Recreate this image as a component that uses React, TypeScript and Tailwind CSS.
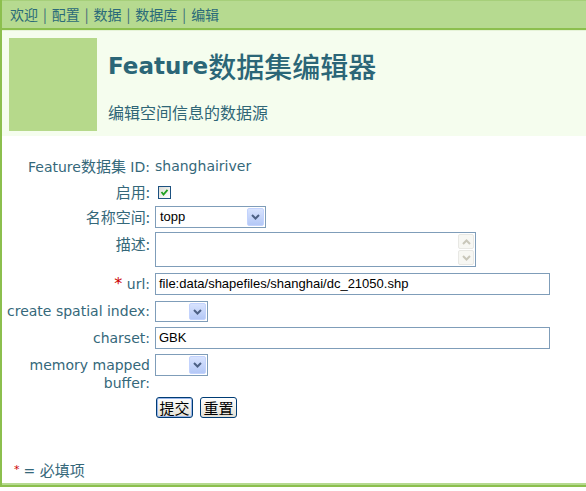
import React from "react";

const navItems = ["欢迎", "配置", "数据", "数据库", "编辑"];

const Chevron = ({ color = "#4d6185" }: { color?: string }) => (
  <svg width="9" height="6" viewBox="0 0 9 6">
    <path d="M1 1 L4.5 4.5 L8 1" fill="none" stroke={color} strokeWidth="2" />
  </svg>
);

const Select = ({ value, width, height }: { value?: string; width: string; height: string }) => (
  <div className={`${width} ${height} flex border border-[#7f9db9] bg-white`}>
    <span className="flex-1 px-[4px] leading-[20px] text-[13px] text-black font-['Liberation_Sans',sans-serif]">
      {value}
    </span>
    <div className="w-[17px] m-[1px] flex items-center justify-center rounded-[2px] border border-[#c3d3fd] bg-gradient-to-b from-[#d8e3fe] to-[#b4c8f6]">
      <Chevron />
    </div>
  </div>
);

const TextInput = ({ value }: { value: string }) => (
  <div className="w-[395px] h-[22px] border border-[#7f9db9] bg-white px-[3px] leading-[20px] text-[13px] text-black font-['Liberation_Sans',sans-serif]">
    {value}
  </div>
);

const XpButton = ({ label, focused }: { label: string; focused?: boolean }) => (
  <button
    className={`h-[21px] w-[37px] rounded-[3px] border border-[#003c74] bg-gradient-to-b from-white to-[#e3e0d5] text-[15px] leading-[17px] text-black ${
      focused ? "shadow-[inset_0_0_0_1px_#9ab6ea]" : ""
    }`}
  >
    {label}
  </button>
);

const Row = ({ label, children, labelClass = "", className = "" }: { label: React.ReactNode; children: React.ReactNode; labelClass?: string; className?: string }) => (
  <div className={`flex items-start ${className}`}>
    <div className={`w-[148px] shrink-0 text-right ${labelClass}`}>{label}</div>
    <div className="ml-[5px] flex-1">{children}</div>
  </div>
);

// chinese glyphs render a touch bigger than the latin text in the labels
const Zh = ({ children }: { children: React.ReactNode }) => (
  <span className="text-[15px] font-['Noto_Sans_CJK_SC',sans-serif]">{children}</span>
);

export default function App() {
  return (
    <div className="w-[586px] h-[491px] bg-white text-[#35687a] font-['DejaVu_Sans','Noto_Sans_CJK_SC',sans-serif] text-[14px]">
      <div className="h-[485px] flex flex-col border-l-2 border-[#8cbf4e]">
        {/* nav */}
        <div className="h-[30px] shrink-0 bg-[#b6da90] border-t border-[#a6cf7a] border-b-2 border-b-[#8cbf4e] flex items-center pl-[8px] text-[14px] text-[#2b6a79] font-['Noto_Sans_CJK_SC',sans-serif]">
          {navItems.map((item, i) => (
            <React.Fragment key={item}>
              {i > 0 && <span className="mx-[5px] text-[#35687a]">|</span>}
              <span>{item}</span>
            </React.Fragment>
          ))}
        </div>

        {/* header */}
        <div className="shrink-0 bg-[#f5fdee] border-t border-[#e6f3d8] flex px-[7px] pt-[7px] pb-[5px]">
          <div className="w-[88px] h-[93px] bg-[#b6d98b]" />
          <div className="ml-[11px] flex flex-col">
            <div className="mt-[12px] h-[32px] flex items-center text-[#2b6677]">
              <span className="font-['DejaVu_Sans',sans-serif] font-bold text-[23px]">Feature</span>
              <span className="font-['Noto_Sans_CJK_SC',sans-serif] font-medium text-[28px] leading-[32px]">数据集编辑器</span>
            </div>
            <div className="mt-[20px] text-[16px] leading-[20px] text-[#2f6676] font-['Noto_Sans_CJK_SC',sans-serif]">
              编辑空间信息的数据源
            </div>
          </div>
        </div>

        {/* form */}
        <div className="flex-1 flex flex-col pt-[20px]">
          <Row
            label={
              <>
                Feature<Zh>数据集</Zh> ID:
              </>
            }
            labelClass="leading-[20px]"
            className="h-[20px]"
          >
            <span className="leading-[20px]">shanghairiver</span>
          </Row>
          <Row label={<Zh>启用:</Zh>} labelClass="leading-[20px]" className="mt-[6px] h-[20px]">
            <div className="ml-[3px] mt-[4px] w-[13px] h-[13px] border border-[#1c5180] bg-gradient-to-br from-[#dcdcd7] to-white flex items-center justify-center">
              <svg width="9" height="9" viewBox="0 0 9 9">
                <path d="M1.5 4 L3.5 6.5 L7.5 1.8" fill="none" stroke="#21a121" strokeWidth="1.8" />
              </svg>
            </div>
          </Row>
          <Row label={<Zh>名称空间:</Zh>} labelClass="leading-[20px] pt-[1px]" className="mt-[4px]">
            <Select value="topp" width="w-[111px]" height="h-[22px]" />
          </Row>
          <Row label={<Zh>描述:</Zh>} labelClass="leading-[20px] pt-[2px]" className="mt-[4px]">
            <div className="w-[321px] h-[35px] border border-[#7f9db9] bg-white flex justify-end p-[1px]">
              <div className="w-[16px] flex flex-col gap-[1px]">
                <div className="flex-1 flex items-center justify-center rounded-[2px] border border-[#e8e8e4] bg-[#f7f7f3]">
                  <svg width="9" height="6" viewBox="0 0 9 6">
                    <path d="M1 5 L4.5 1.5 L8 5" fill="none" stroke="#c9c7ba" strokeWidth="2" />
                  </svg>
                </div>
                <div className="flex-1 flex items-center justify-center rounded-[2px] border border-[#e8e8e4] bg-[#f7f7f3]">
                  <Chevron color="#c9c7ba" />
                </div>
              </div>
            </div>
          </Row>
          <Row
            label={
              <>
                <span className="text-[#cc0000] text-[16px]">*</span> url:
              </>
            }
            labelClass="leading-[20px] pt-[1px]"
            className="mt-[6px]"
          >
            <TextInput value="file:data/shapefiles/shanghai/dc_21050.shp" />
          </Row>
          <Row label="create spatial index:" labelClass="leading-[20px]" className="mt-[6px]">
            <Select width="w-[53px]" height="h-[21px]" />
          </Row>
          <Row label="charset:" labelClass="leading-[20px] pt-[1px]" className="mt-[5px]">
            <TextInput value="GBK" />
          </Row>
          <Row label="memory mapped buffer:" labelClass="leading-[18px] pt-[2px]" className="mt-[5px]">
            <Select width="w-[53px]" height="h-[22px]" />
          </Row>
          <div className="mt-[5px] ml-[154px] flex gap-[7px] font-['Noto_Sans_CJK_SC',sans-serif]">
            <XpButton label="提交" focused />
            <XpButton label="重置" />
          </div>
          <div className="flex-1" />
          <div className="pl-[12px] pb-[2px] leading-[20px]">
            <span className="text-[#cc0000] text-[11px] align-top">*</span>
            <span className="ml-[4px]">= </span>
            <Zh>必填项</Zh>
          </div>
        </div>
        <div className="h-[2px] bg-[#b6da90] shrink-0" />
      </div>
      <div className="h-[2px] bg-[#8cbf4e]" />
    </div>
  );
}
